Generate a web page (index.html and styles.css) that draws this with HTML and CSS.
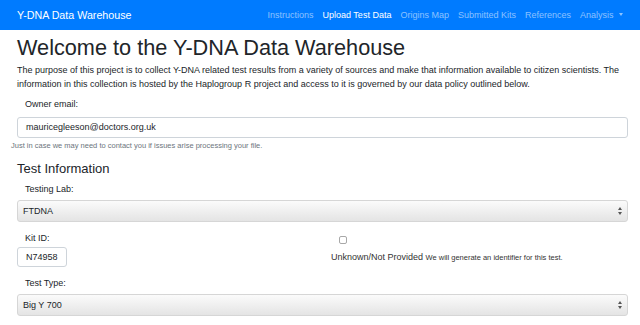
FILE: index.html
```html
<!DOCTYPE html>
<html>
<head>
    <meta charset="utf-8">
    <link rel="stylesheet" href="styles.css">
</head>
<body>
    <nav class="navbar">
        <a class="brand" href="#">Y-DNA Data Warehouse</a>
        <ul class="nav-links">
            <li><a href="#">Instructions</a></li>
            <li><a class="active" href="#">Upload Test Data</a></li>
            <li><a href="#">Origins Map</a></li>
            <li><a href="#">Submitted Kits</a></li>
            <li><a href="#">References</a></li>
            <li><a href="#">Analysis <span class="caret"></span></a></li>
        </ul>
    </nav>
    <div class="container">
        <h1>Welcome to the Y-DNA Data Warehouse</h1>
        <p class="intro">The purpose of this project is to collect Y-DNA related test results from a variety of sources and make that information available to citizen scientists. The information in this collection is hosted by the Haplogroup R project and access to it is governed by our data policy outlined below.</p>

        <div class="form-group email-group">
            <label class="field-label">Owner email:</label>
            <div class="text-input">mauricegleeson@doctors.org.uk</div>
            <small class="help">Just in case we may need to contact you if issues arise processing your file.</small>
        </div>

        <h2>Test Information</h2>
        <div class="form-group lab-group">
            <label class="field-label">Testing Lab:</label>
            <div class="select-box">FTDNA<span class="arrows"></span></div>
        </div>

        <div class="form-row">
            <div class="col kit-col">
                <label class="field-label">Kit ID:</label>
                <div class="text-input kit">N74958</div>
            </div>
            <div class="col check-col">
                <span class="checkbox"></span>
                <div class="check-label">Unknown/Not Provided <small>We will generate an identifier for this test.</small></div>
            </div>
        </div>

        <div class="form-group type-group">
            <label class="field-label">Test Type:</label>
            <div class="select-box">Big Y 700<span class="arrows"></span></div>
        </div>
    </div>
</body>
</html>
```

FILE: styles.css
```css
body {
    margin: 0;
    padding: 0;
    background-color: #fff;
    color: #212529;
    font-family: "Liberation Sans", Arial, sans-serif;
    font-size: 9px;
}

.navbar {
    height: 30px;
    background-color: #007bff;
    display: flex;
    align-items: center;
    justify-content: space-between;
    padding: 0 17px;
}

.brand {
    color: #fff;
    text-decoration: none;
    font-size: 10.7px;
}

.nav-links {
    list-style: none;
    margin: 0;
    padding: 0;
    display: flex;
    gap: 9px;
}

.nav-links a {
    color: rgba(255, 255, 255, 0.55);
    text-decoration: none;
    font-size: 9px;
}

.nav-links a.active {
    color: #fff;
}

.caret {
    display: inline-block;
    margin-left: 3px;
    vertical-align: 2px;
    border-top: 3px solid rgba(255, 255, 255, 0.55);
    border-left: 2.5px solid transparent;
    border-right: 2.5px solid transparent;
}

.container {
    padding: 0 12px 0 17px;
}

h1 {
    font-size: 21.7px;
    font-weight: 400;
    margin: 5px 0 0;
    line-height: 26px;
}

.intro {
    margin: 2px 0 0;
    line-height: 14px;
    font-size: 9px;
}

.field-label {
    display: block;
    padding-left: 8px;
    line-height: 12px;
    margin-bottom: 5px;
}

.email-group {
    margin-top: 7px;
}

.email-group .field-label {
    margin-bottom: 7px;
}

.text-input {
    border: 1px solid #ced4da;
    border-radius: 3px;
    height: 19px;
    line-height: 19px;
    padding: 0 8px;
}

.text-input.kit {
    display: inline-block;
    height: 18px;
    line-height: 18px;
    padding: 0 8px;
}

.help {
    display: block;
    color: #6c757d;
    font-size: 7.5px;
    line-height: 10px;
    margin: 3px 0 0 -6px;
}

h2 {
    font-size: 13px;
    font-weight: 400;
    margin: 10px 0 0;
    line-height: 16px;
}

.lab-group {
    margin-top: 6px;
}

.type-group {
    margin-top: 10px;
}

.select-box {
    position: relative;
    height: 20px;
    line-height: 20px;
    padding: 0 5px;
    border: 1px solid #d6d6d6;
    border-radius: 3px;
    background: linear-gradient(#fbfbfb, #e4e4e4);
}

.arrows {
    position: absolute;
    right: 5px;
    top: 6px;
    width: 4px;
    height: 8px;
}

.arrows::before,
.arrows::after {
    content: "";
    position: absolute;
    left: 0;
    border-left: 2px solid transparent;
    border-right: 2px solid transparent;
}

.arrows::before {
    top: 0;
    border-bottom: 3px solid #555;
}

.arrows::after {
    bottom: 0;
    border-top: 3px solid #555;
}

.form-row {
    display: grid;
    grid-template-columns: 314px 1fr;
    margin-top: 10px;
}

.kit-col .field-label {
    margin-bottom: 3px;
}

.check-col {
    padding-top: 4px;
}

.checkbox {
    display: block;
    width: 6px;
    height: 6px;
    border: 1px solid #a8a8a8;
    border-radius: 2px;
    margin-left: 8px;
}

.check-label {
    margin-top: 7px;
    line-height: 12px;
    color: #333;
}

.check-label small {
    font-size: 7.5px;
}
```
